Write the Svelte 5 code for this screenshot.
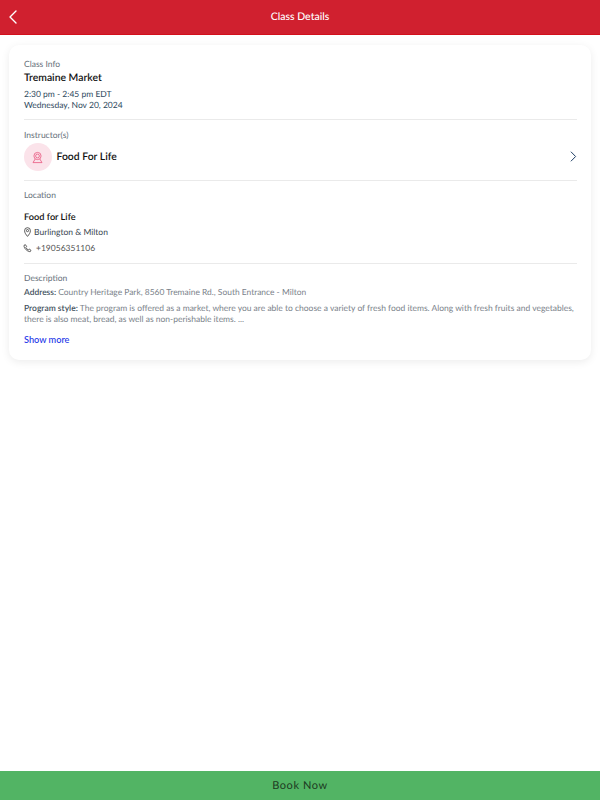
<script lang="ts">
	const programStyle =
		'The program is offered as a market, where you are able to choose a variety of fresh food items. Along with fresh fruits and vegetables, there is also meat, bread, as well as non-perishable items. ...';
</script>

<div class="page">
	<header class="topbar">
		<button class="back" aria-label="Back">
			<svg width="10" height="14" viewBox="0 0 10 14" fill="none">
				<path d="M8 1 2 7l6 6" stroke="#fff" stroke-width="1.4" stroke-linecap="round" stroke-linejoin="round" />
			</svg>
		</button>
		<h1>Class Details</h1>
	</header>

	<main class="content">
		<section class="card">
			<div class="block info">
				<p class="label">Class Info</p>
				<h2>Tremaine Market</h2>
				<p class="time">2:30 pm - 2:45 pm EDT</p>
				<p class="time">Wednesday, Nov 20, 2024</p>
			</div>

			<div class="block instructor">
				<p class="label">Instructor(s)</p>
				<div class="instructor-row">
					<div class="avatar">
						<svg width="13" height="13" viewBox="0 0 13 13" fill="none" stroke="#e8577f" stroke-width="0.8">
							<circle cx="6.5" cy="5" r="3.6" />
							<circle cx="6.5" cy="5" r="1.9" />
							<path d="M4.2 8 2 11.6h9L8.8 8" stroke-linejoin="round" />
						</svg>
					</div>
					<span class="instructor-name">Food For Life</span>
					<svg class="chevron" width="7" height="11" viewBox="0 0 7 11" fill="none">
						<path d="M1.2 1 5.6 5.5 1.2 10" stroke="#1f3f66" stroke-width="1" stroke-linecap="round" stroke-linejoin="round" />
					</svg>
				</div>
			</div>

			<div class="block location">
				<p class="label">Location</p>
				<h3>Food for Life</h3>
				<div class="contact">
					<svg width="7" height="10" viewBox="0 0 7 10" fill="none" stroke="#333" stroke-width="0.8">
						<path d="M3.5 9.4C2 7.6.6 5.9.6 3.6a2.9 2.9 0 0 1 5.8 0c0 2.3-1.4 4-2.9 5.8Z" stroke-linejoin="round" />
						<circle cx="3.5" cy="3.6" r="1.1" />
					</svg>
					<span class="region">Burlington &amp; Milton</span>
				</div>
				<div class="contact">
					<svg class="phone-icon" width="9" height="9" viewBox="0 0 9 9" fill="none" stroke="#333" stroke-width="0.8">
						<path d="M1 1.4 2.4.7l1.2 1.8-.8.9c.4 1 1.4 2 2.5 2.5l.9-.8 1.800 1.200-.7 1.300C5 8 .7 4.500 1 1.400Z" stroke-linejoin="round" />
					</svg>
					<span class="phone">+19056351106</span>
				</div>
			</div>

			<div class="block description">
				<p class="label">Description</p>
				<p class="desc"><strong>Address:</strong> Country Heritage Park, 8560 Tremaine Rd., South Entrance - Milton</p>
				<p class="desc"><strong>Program style:</strong> {programStyle}</p>
				<button class="more">Show more</button>
			</div>
		</section>
	</main>

	<footer class="book">Book Now</footer>
</div>

<style>
	:global(body) {
		margin: 0;
		background: #fff;
	}

	.page {
		height: 800px;
		display: flex;
		flex-direction: column;
		font-family: Lato, 'Open Sans', sans-serif;
		text-rendering: geometricPrecision;
	}

	.topbar {
		height: 34px;
		flex: none;
		background: #d0202f;
		border-bottom: 1px solid #d3101c;
		display: flex;
		align-items: center;
		justify-content: center;
		position: relative;
	}

	.topbar h1 {
		margin: 0;
		font-size: 10.5px;
		font-weight: 500;
		color: #fff;
	}

	.back {
		position: absolute;
		left: 8px;
		top: 10px;
		padding: 0;
		border: 0;
		background: none;
		display: flex;
	}

	.content {
		flex: 1;
		padding: 10px 9px 0 9px;
	}

	.card {
		background: #fff;
		border-radius: 10px;
		box-shadow: 0 2px 8px rgba(0, 0, 0, 0.08);
		padding: 0 14px 0 15px;
		height: 315px;
		box-sizing: border-box;
	}

	.block {
		border-bottom: 1px solid #eaeaea;
	}

	.block:last-child {
		border-bottom: 0;
	}

	p {
		margin: 0;
	}

	.label {
		font-size: 8.5px;
		line-height: 11px;
		color: #66707a;
	}

	.info {
		padding-top: 14px;
		height: 75px;
		box-sizing: border-box;
	}

	h2 {
		margin: 1px 0 4px;
		font-size: 10.4px;
		line-height: 14px;
		font-weight: 600;
		color: #111;
	}

	.time {
		font-size: 8.5px;
		line-height: 10.5px;
		color: #2f4a5e;
	}

	.instructor {
		height: 61px;
		box-sizing: border-box;
		padding-top: 10px;
	}

	.instructor-row {
		display: flex;
		align-items: center;
		margin-top: 2px;
	}

	.avatar {
		width: 28px;
		height: 28px;
		margin-left: -0.5px;
		border-radius: 50%;
		background: #fbe3ea;
		display: flex;
		align-items: center;
		justify-content: center;
	}

	.instructor-name {
		margin-left: 5px;
		margin-bottom: 1px;
		font-size: 10.4px;
		font-weight: 600;
		color: #111;
		flex: 1;
	}

	.chevron {
		margin-bottom: 1px;
	}

	.location {
		height: 83px;
		box-sizing: border-box;
		padding-top: 9px;
	}

	h3 {
		margin: 10px 0 1px;
		font-size: 9.2px;
		line-height: 12px;
		font-weight: 600;
		color: #111;
	}

	.contact {
		display: flex;
		align-items: center;
		height: 16px;
	}

	.region {
		margin-left: 3px;
		font-size: 8.5px;
		color: #3a4550;
	}

	.phone-icon {
		margin-left: -1px;
	}

	.phone {
		margin-left: 4px;
		font-size: 8.5px;
		color: #555;
	}

	.description {
		padding-top: 9px;
	}

	.desc {
		margin-top: 3px;
		font-size: 8.43px;
		line-height: 11px;
		color: #7a828a;
	}

	.desc + .desc {
		margin-top: 5px;
		font-size: 8.49px;
	}

	.desc strong {
		font-weight: 600;
		color: #44525e;
	}

	.more {
		margin-top: 9px;
		padding: 0;
		border: 0;
		background: none;
		font: inherit;
		font-size: 9.2px;
		font-weight: 500;
		color: #1a34e8;
	}

	.book {
		height: 29px;
		flex: none;
		background: #52b464;
		display: flex;
		align-items: center;
		justify-content: center;
		font-size: 11px;
		letter-spacing: 0.6px;
		color: #1d3a22;
	}
</style>
